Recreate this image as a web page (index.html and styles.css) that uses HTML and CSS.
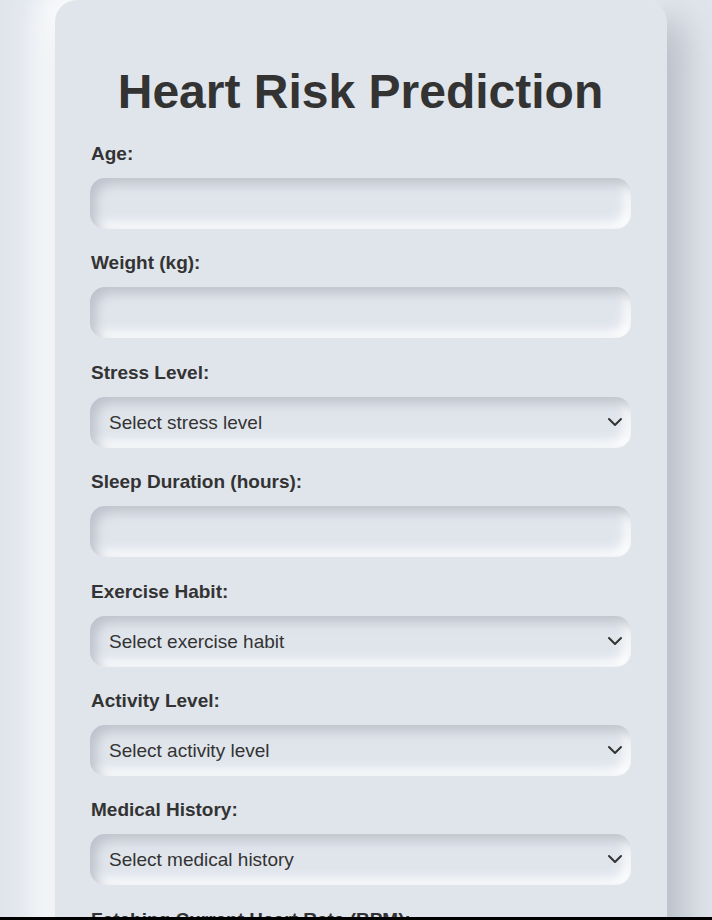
FILE: index.html
```html
<!DOCTYPE html>
<html lang="en">
<head>
<meta charset="utf-8">
<title>Heart Risk Prediction</title>
<link rel="stylesheet" href="styles.css">
</head>
<body>
<div class="card">
  <h1 class="title">Heart Risk Prediction</h1>
  <form class="form">
    <div class="group">
      <label class="label">Age:</label>
      <input class="field" type="number">
    </div>
    <div class="group">
      <label class="label">Weight (kg):</label>
      <input class="field" type="number">
    </div>
    <div class="group">
      <label class="label">Stress Level:</label>
      <div class="select-wrap">
        <select class="field select"><option>Select stress level</option></select>
        <svg class="chev" width="16" height="10" viewBox="0 0 16 10"><path d="M2 2 L8 8 L14 2" fill="none" stroke="#333" stroke-width="2" stroke-linecap="round" stroke-linejoin="round"/></svg>
      </div>
    </div>
    <div class="group">
      <label class="label">Sleep Duration (hours):</label>
      <input class="field" type="number">
    </div>
    <div class="group">
      <label class="label">Exercise Habit:</label>
      <div class="select-wrap">
        <select class="field select"><option>Select exercise habit</option></select>
        <svg class="chev" width="16" height="10" viewBox="0 0 16 10"><path d="M2 2 L8 8 L14 2" fill="none" stroke="#333" stroke-width="2" stroke-linecap="round" stroke-linejoin="round"/></svg>
      </div>
    </div>
    <div class="group">
      <label class="label">Activity Level:</label>
      <div class="select-wrap">
        <select class="field select"><option>Select activity level</option></select>
        <svg class="chev" width="16" height="10" viewBox="0 0 16 10"><path d="M2 2 L8 8 L14 2" fill="none" stroke="#333" stroke-width="2" stroke-linecap="round" stroke-linejoin="round"/></svg>
      </div>
    </div>
    <div class="group">
      <label class="label">Medical History:</label>
      <div class="select-wrap">
        <select class="field select"><option>Select medical history</option></select>
        <svg class="chev" width="16" height="10" viewBox="0 0 16 10"><path d="M2 2 L8 8 L14 2" fill="none" stroke="#333" stroke-width="2" stroke-linecap="round" stroke-linejoin="round"/></svg>
      </div>
    </div>
    <div class="group">
      <label class="label">Fetching Current Heart Rate (BPM):</label>
      <input class="field" type="number">
    </div>
  </form>
</div>
<div class="bottom-bar"></div>
</body>
</html>
```
FILE: styles.css
```css
html, body {
  margin: 0;
  padding: 0;
}
body {
  background: #e0e5ec;
  font-family: "Liberation Sans", Arial, sans-serif;
  color: #333;
  overflow: hidden;
  height: 920px;
}
.card {
  margin-left: 55px;
  width: 612px;
  box-sizing: border-box;
  padding: 64px 36px 40px 35px;
  background: #e0e5ec;
  border-radius: 22px;
  box-shadow: 18px 18px 36px #b8bec7, -18px -18px 36px #ffffff;
}
.title {
  margin: 0 0 25px;
  font-size: 48px;
  font-weight: bold;
  text-align: center;
  color: #333;
  line-height: normal;
}
.form {
  display: flex;
  flex-direction: column;
  gap: 24.4px;
}
.group {
  display: flex;
  flex-direction: column;
}
.label {
  font-size: 19px;
  font-weight: bold;
  line-height: 20px;
  margin-bottom: 14px;
  padding-left: 1px;
  color: #333;
}
.field {
  display: block;
  width: 100%;
  height: 51px;
  box-sizing: border-box;
  border: none;
  outline: none;
  border-radius: 15px;
  background: #e0e5ec;
  box-shadow: inset 6px 6px 12px #bcc2cb, inset -6px -6px 12px #ffffff;
  font-family: "Liberation Sans", Arial, sans-serif;
  font-size: 19px;
  color: #333;
  padding: 0 19px;
}
.select {
  appearance: none;
  -webkit-appearance: none;
}
.select-wrap {
  position: relative;
}
.chev {
  position: absolute;
  right: 8px;
  top: 20px;
  pointer-events: none;
}
.bottom-bar {
  position: fixed;
  left: 0;
  right: 0;
  bottom: 0;
  height: 3px;
  background: #000;
}
```
